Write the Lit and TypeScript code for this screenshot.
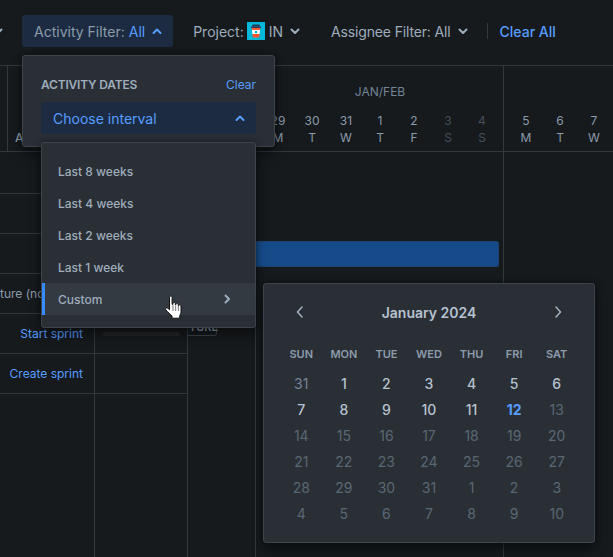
import { LitElement, html, css, svg } from 'lit';
import { customElement } from 'lit/decorators.js';
import { classMap } from 'lit/directives/class-map.js';

type Dir = 'up' | 'down' | 'left' | 'right' | 'small-right';

const chevron = (dir: Dir) => {
  const d = {
    up: 'M3.5 9l3.500-3.500 3.500 3.500',
    down: 'M3.5 5.5l3.500 3.500 3.500-3.500',
    left: 'M9 2l-4.500 5 4.500 5',
    right: 'M5 2l4.500 5-4.500 5',
    'small-right': 'M5.500 3.500l3.500 3.500-3.500 3.500',
  }[dir];
  return svg`<svg class="chev ${dir}" width="14" height="14" viewBox="0 0 14 14" fill="none"><path d=${d} stroke="currentColor" stroke-linecap="round" stroke-linejoin="round"/></svg>`;
};

const WEEK = [
  { n: '29', d: 'M' },
  { n: '30', d: 'T' },
  { n: '31', d: 'W' },
  { n: '1', d: 'T' },
  { n: '2', d: 'F' },
  { n: '3', d: 'S', off: true },
  { n: '4', d: 'S', off: true },
];
const NEXT_WEEK = [
  { n: '5', d: 'M' },
  { n: '6', d: 'T' },
  { n: '7', d: 'W' },
];
const INTERVALS = ['Last 8 weeks', 'Last 4 weeks', 'Last 2 weeks', 'Last 1 week'];
const WEEKDAYS = ['SUN', 'MON', 'TUE', 'WED', 'THU', 'FRI', 'SAT'];

// 31 Dec is "prev", 1-11 are live, 12 is today, everything after is disabled
const CAL: { n: number; kind: string }[] = [
  { n: 31, kind: 'prev' },
  ...Array.from({ length: 11 }, (_, i) => ({ n: i + 1, kind: 'live' })),
  { n: 12, kind: 'today' },
  ...Array.from({ length: 19 }, (_, i) => ({ n: i + 13, kind: 'dis' })),
  ...Array.from({ length: 10 }, (_, i) => ({ n: i + 1, kind: 'dis' })),
];

@customElement('app-root')
export class AppRoot extends LitElement {
  static override styles = css`
    :host {
      display: block;
      position: relative;
      width: 613px;
      height: 557px;
      overflow: hidden;
      background: #161a1d;
      color: #9fadbc;
      font-family: Inter, 'Liberation Sans', sans-serif;
      font-size: 14px;
    }

    .chev {
      flex-shrink: 0;
    }
    .chev path {
      stroke-width: 2;
    }
    .cal-head .chev path {
      stroke-width: 1.6;
    }
    .cal-head .left {
      margin-right: 2px;
    }
    .cal-head .right {
      margin-left: 3px;
    }

    /* Toolbar */
    .toolbar {
      display: flex;
      align-items: center;
      gap: 8px;
      height: 66px;
      padding: 0 0 3px 22px;
      box-sizing: border-box;
      border-bottom: 1px solid #31383f;
      position: relative;
    }
    .stub {
      position: absolute;
      left: -9px;
      top: 24px;
      color: #9fadbc;
    }
    .filter {
      display: flex;
      align-items: center;
      height: 32px;
      padding: 0 9px 0 12px;
      border-radius: 3px;
      white-space: nowrap;
      color: #9fadbc;
      box-sizing: border-box;
    }
    .filter .chev {
      margin-left: 5px;
    }
    .filter.open {
      background: #1c2b41;
      color: #8c9bab;
    }
    .filter.open .chev,
    .filter.open b {
      color: #579dff;
    }
    .filter b {
      font-weight: 400;
      margin-left: 4px;
    }
    .filter .in {
      margin-left: 4px;
    }
    .filter.assignee {
      letter-spacing: -0.15px;
    }
    .project-icon {
      display: block;
      margin-left: 3px;
    }
    .sep {
      width: 1px;
      height: 16px;
      background: #31383f;
    }
    .clear-all {
      margin-left: 4px;
      color: #579dff;
      font-weight: 500;
    }

    /* Timeline header */
    .head {
      display: flex;
      height: 86px;
      border-bottom: 1px solid #31383f;
      box-sizing: border-box;
    }
    .head-left {
      width: 248px;
      flex-shrink: 0;
      margin-left: 7px;
      border-left: 1px solid #31383f;
      box-sizing: border-box;
      padding: 64px 0 0 7px;
      font-size: 12px;
      line-height: 15px;
      font-weight: 500;
      color: #8c9bab;
    }
    .head-week {
      width: 248px;
      flex-shrink: 0;
      border-left: 1px solid #31383f;
      box-sizing: border-box;
      padding: 18px 0 0 5px;
    }
    .month {
      height: 16px;
      line-height: 16px;
      text-align: center;
      font-size: 12px;
      color: #738496;
      padding-right: 4px;
    }
    .days {
      display: flex;
      margin-top: 12px;
    }
    .day {
      width: 34px;
      text-align: center;
      font-size: 12px;
      line-height: 17px;
      color: #8c9bab;
    }
    .day.off {
      color: #454f59;
    }

    /* Body */
    .body {
      display: flex;
      height: 405px;
    }
    .table {
      width: 188px;
      flex-shrink: 0;
    }
    .row {
      display: grid;
      grid-template-columns: 95px 93px;
      height: 40px;
      border-bottom: 1px solid #31383f;
      box-sizing: border-box;
    }
    .row:first-child {
      height: 42px;
    }
    .cell {
      display: flex;
      align-items: center;
      font-size: 12px;
      white-space: nowrap;
      overflow: hidden;
      min-width: 0;
      border-right: 1px solid #31383f;
    }
    .cell.action {
      justify-content: flex-end;
      padding-right: 11px;
      color: #579dff;
    }
    .cell.name {
      color: #8c9bab;
    }
    .skeleton {
      width: 77px;
      height: 4px;
      margin-left: 8px;
      border-radius: 2px;
      background: #22272b;
    }
    .rest {
      display: grid;
      grid-template-columns: 95px 93px;
      height: 163px;
    }
    .rest div {
      border-right: 1px solid #31383f;
    }
    .col-tag {
      width: 67px;
      flex-shrink: 0;
      box-sizing: border-box;
      padding-top: 166px;
    }
    .tag {
      width: 29px;
      height: 18px;
      box-sizing: border-box;
      border: 1px solid #3d444c;
      border-left: none;
      border-radius: 0 3px 3px 0;
      font-size: 11px;
      font-weight: 600;
      line-height: 16px;
      padding-left: 1px;
      color: #8c9bab;
      white-space: nowrap;
    }
    .col-week {
      width: 248px;
      flex-shrink: 0;
      box-sizing: border-box;
      border-left: 1px solid #31383f;
    }
    .bar {
      width: 243px;
      height: 26px;
      margin-top: 89px;
      box-sizing: border-box;
      background: #164b8a;
      border: 1px solid #1e4272;
      border-left: none;
      border-radius: 0 3px 3px 0;
    }

    /* Overlays */
    .pop {
      position: absolute;
      box-sizing: border-box;
      background: #2a2f36;
      border: 1px solid #3d444c;
      border-radius: 3px;
      box-shadow: 0 8px 12px rgba(3, 4, 4, 0.36), 0 0 6px rgba(3, 4, 4, 0.4);
    }
    .dates {
      left: 22px;
      top: 55px;
      width: 253px;
      height: 92px;
      padding: 18px 18px 0;
    }
    .dates-head {
      display: flex;
      justify-content: space-between;
      align-items: center;
      height: 20px;
      margin-bottom: 8px;
      font-size: 12px;
    }
    .dates-title {
      font-weight: 600;
      letter-spacing: -0.2px;
      color: #9fadbc;
    }
    .dates-clear {
      color: #579dff;
    }
    .choose {
      display: flex;
      justify-content: space-between;
      align-items: center;
      height: 32px;
      padding: 0 9px 0 12px;
      background: #1c2b41;
      color: #579dff;
      border-radius: 3px;
    }
    .menu {
      left: 41px;
      top: 142px;
      width: 215px;
      height: 186px;
      padding: 12px 0;
    }
    .item {
      display: flex;
      justify-content: space-between;
      align-items: center;
      height: 32px;
      padding: 0 21px 0 13px;
      border-left: 3px solid transparent;
      font-size: 12px;
      font-weight: 500;
      color: #9fadbc;
    }
    .item.active {
      background: #333a42;
      border-left-color: #388bff;
    }
    .calendar {
      left: 263px;
      top: 283px;
      width: 332px;
      height: 260px;
      padding: 12px 16px 16px;
    }
    .cal-grid {
      display: grid;
      grid-template-columns: repeat(7, 1fr);
      justify-items: center;
      align-items: center;
    }
    .cal-head {
      height: 32px;
      margin-bottom: 13px;
      color: #9fadbc;
    }
    .cal-title {
      grid-column: span 5;
      font-weight: 600;
      color: #b6c2cf;
    }
    .cal-week {
      height: 26px;
      margin-bottom: 3px;
      font-size: 11px;
      font-weight: 600;
      color: #8c9bab;
    }
    .cal-days {
      grid-auto-rows: 26px;
    }
    .cal-day.prev {
      color: #738496;
    }
    .cal-day.live {
      color: #b6c2cf;
      font-weight: 500;
    }
    .cal-day.today {
      color: #579dff;
      font-weight: 700;
    }
    .cal-day.dis {
      color: #596773;
    }
    .cursor {
      position: absolute;
      left: 164px;
      top: 295px;
    }
  `;

  private renderProjectIcon() {
    return html`<svg class="project-icon" width="18" height="18" viewBox="0 0 18 18">
      <rect width="18" height="18" fill="#00b8d9" />
      <rect x="5" y="2.500" width="8" height="2" rx="1" fill="#253858" />
      <rect x="4" y="4.500" width="10" height="1.500" fill="#253858" />
      <path d="M4.700 6h8.600l-.3 2H5z" fill="#ff5630" />
      <path d="M5 8h8l-.4 4H5.400z" fill="#fff" />
      <circle cx="9" cy="10" r="1.300" fill="#00b8d9" />
      <path d="M5.400 12h7.200l-.3 3.500H5.700z" fill="#ff5630" />
    </svg>`;
  }

  private renderRows() {
    const rows = [
      html`<div class="cell"></div><div class="cell"></div>`,
      html`<div class="cell"></div><div class="cell"></div>`,
      html`<div class="cell"></div><div class="cell"></div>`,
      html`<div class="cell name">ture (no sprint)</div><div class="cell"></div>`,
      html`<div class="cell action">Start sprint</div><div class="cell"><div class="skeleton"></div></div>`,
      html`<div class="cell action">Create sprint</div><div class="cell"></div>`,
    ];
    return rows.map((r) => html`<div class="row">${r}</div>`);
  }

  override render() {
    return html`
      <div class="toolbar">
        <span class="stub">${chevron('down')}</span>
        <div class="filter open">Activity Filter:<b>All</b>${chevron('up')}</div>
        <div class="filter">Project:${this.renderProjectIcon()}<span class="in">IN</span>${chevron('down')}</div>
        <div class="filter assignee">Assignee Filter: All${chevron('down')}</div>
        <div class="sep"></div>
        <div class="clear-all">Clear All</div>
      </div>

      <div class="head">
        <div class="head-left">ASSIGNEE</div>
        <div class="head-week">
          <div class="month">JAN/FEB</div>
          <div class="days">
            ${WEEK.map((d) => html`<div class=${classMap({ day: true, off: !!d.off })}>${d.n}<br />${d.d}</div>`)}
          </div>
        </div>
        <div class="head-week">
          <div class="month"></div>
          <div class="days">
            ${NEXT_WEEK.map((d) => html`<div class="day">${d.n}<br />${d.d}</div>`)}
          </div>
        </div>
      </div>

      <div class="body">
        <div class="table">
          ${this.renderRows()}
          <div class="rest"><div></div><div></div></div>
        </div>
        <div class="col-tag"><div class="tag">TURE</div></div>
        <div class="col-week"><div class="bar"></div></div>
        <div class="col-week"></div>
      </div>

      <div class="pop dates">
        <div class="dates-head">
          <span class="dates-title">ACTIVITY DATES</span>
          <span class="dates-clear">Clear</span>
        </div>
        <div class="choose">Choose interval ${chevron('up')}</div>
      </div>

      <div class="pop menu">
        ${INTERVALS.map((t) => html`<div class="item">${t}</div>`)}
        <div class="item active">Custom ${chevron('small-right')}</div>
      </div>

      <div class="pop calendar">
        <div class="cal-grid cal-head">
          ${chevron('left')}
          <div class="cal-title">January 2024</div>
          ${chevron('right')}
        </div>
        <div class="cal-grid cal-week">${WEEKDAYS.map((d) => html`<div>${d}</div>`)}</div>
        <div class="cal-grid cal-days">
          ${CAL.map((c) => html`<div class="cal-day ${c.kind}">${c.n}</div>`)}
        </div>
      </div>

      <svg class="cursor" width="20" height="26" viewBox="0 0 20 26">
        <path
          d="M5.500 2.200c0-1.500 2.600-1.500 2.600 0v7l.9.1V8.200c0-1.300 2.300-1.300 2.300 0v1.500l.6.1V9c0-1.200 2.300-1.200 2.300 0v1.400l.6.1c0-1 2.200-1 2.200.3v5.400c0 2-.6 3.200-1.300 4.400v2.600H8v-2.300C6.500 19.300 3.800 17.400 1.800 14.700c-.9-1.200.7-2.600 1.900-1.500l1.800 1.400z"
          fill="#fff"
          stroke="#111"
          stroke-width="1"
          stroke-linejoin="round"
        />
        <path d="M9 10v6M11.700 10.500v5.500M14.400 11v5" stroke="#555" stroke-width=".8" />
      </svg>
    `;
  }
}
